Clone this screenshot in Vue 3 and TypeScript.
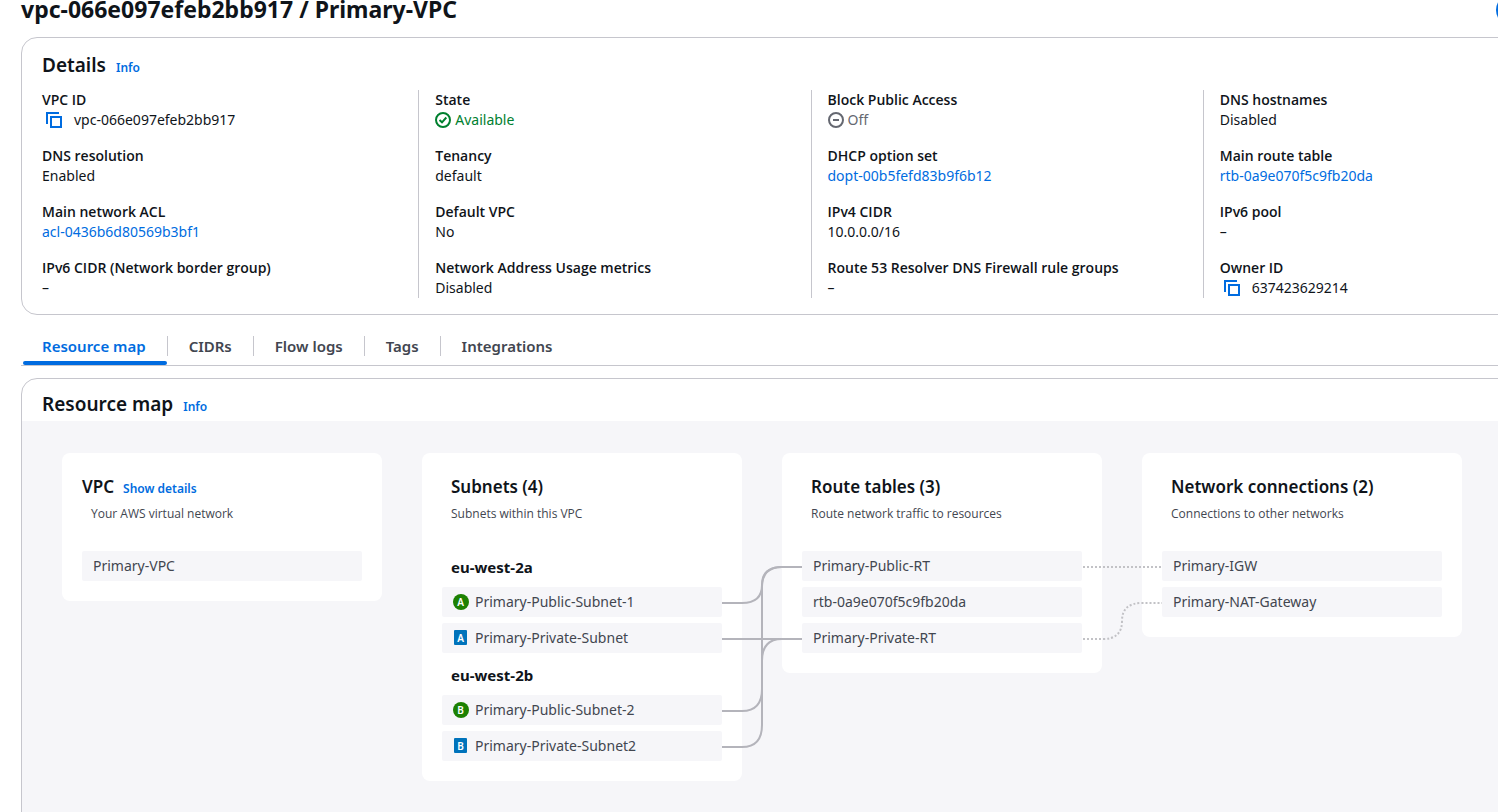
<script setup lang="ts">
type Kind = 'text' | 'link' | 'copy' | 'ok' | 'off'
interface Field {
  label: string
  value: string
  kind: Kind
}
interface Item {
  name: string
  zone?: boolean
  badge?: string
  access?: 'public' | 'private'
}
interface Card {
  title: string
  subtitle: string
  link?: string
  items: Item[]
}

const f = (label: string, value: string, kind: Kind = 'text'): Field => ({ label, value, kind })

const columns: Field[][] = [
  [
    f('VPC ID', 'vpc-066e097efeb2bb917', 'copy'),
    f('DNS resolution', 'Enabled'),
    f('Main network ACL', 'acl-0436b6d80569b3bf1', 'link'),
    f('IPv6 CIDR (Network border group)', '–'),
  ],
  [
    f('State', 'Available', 'ok'),
    f('Tenancy', 'default'),
    f('Default VPC', 'No'),
    f('Network Address Usage metrics', 'Disabled'),
  ],
  [
    f('Block Public Access', 'Off', 'off'),
    f('DHCP option set', 'dopt-00b5fefd83b9f6b12', 'link'),
    f('IPv4 CIDR', '10.0.0.0/16'),
    f('Route 53 Resolver DNS Firewall rule groups', '–'),
  ],
  [
    f('DNS hostnames', 'Disabled'),
    f('Main route table', 'rtb-0a9e070f5c9fb20da', 'link'),
    f('IPv6 pool', '–'),
    f('Owner ID', '637423629214', 'copy'),
  ],
]

const tabs: string[] = ['Resource map', 'CIDRs', 'Flow logs', 'Tags', 'Integrations']

const cards: Card[] = [
  {
    title: 'VPC',
    subtitle: 'Your AWS virtual network',
    link: 'Show details',
    items: [{ name: 'Primary-VPC' }],
  },
  {
    title: 'Subnets (4)',
    subtitle: 'Subnets within this VPC',
    items: [
      { name: 'eu-west-2a', zone: true },
      { name: 'Primary-Public-Subnet-1', badge: 'A', access: 'public' },
      { name: 'Primary-Private-Subnet', badge: 'A', access: 'private' },
      { name: 'eu-west-2b', zone: true },
      { name: 'Primary-Public-Subnet-2', badge: 'B', access: 'public' },
      { name: 'Primary-Private-Subnet2', badge: 'B', access: 'private' },
    ],
  },
  {
    title: 'Route tables (3)',
    subtitle: 'Route network traffic to resources',
    items: [
      { name: 'Primary-Public-RT' },
      { name: 'rtb-0a9e070f5c9fb20da' },
      { name: 'Primary-Private-RT' },
    ],
  },
  {
    title: 'Network connections (2)',
    subtitle: 'Connections to other networks',
    items: [{ name: 'Primary-IGW' }, { name: 'Primary-NAT-Gateway' }],
  },
]

// Connector coordinates are relative to the top left corner of the first card.
const solid: string[] = [
  'M660 150H680Q700 150 700 132Q700 114 720 114H740',
  'M660 186H740',
  'M660 258H680Q700 258 700 236V134Q700 114 720 114',
  'M660 294H680Q700 294 700 272V208Q700 186 720 186H740',
]
const dotted: string[] = [
  'M1021 114H1100',
  'M1021 186H1041Q1060 186 1060 168Q1060 150 1080 150H1100',
]
</script>

<template>
  <main class="page">
    <header class="title-row">
      <h1>vpc-066e097efeb2bb917 / Primary-VPC</h1>
      <button class="primary" type="button" aria-label="Actions"></button>
    </header>

    <section class="panel">
      <div class="panel-head">
        <h2>Details</h2>
        <a class="info" href="#">Info</a>
      </div>
      <div class="columns">
        <dl v-for="(col, c) in columns" :key="c" class="column">
          <div v-for="field in col" :key="field.label">
            <dt>{{ field.label }}</dt>
            <dd :class="field.kind">
              <button v-if="field.kind === 'copy'" class="copy-button" type="button" :aria-label="'Copy ' + field.label">
                <svg viewBox="0 0 16 16" width="16" height="16" fill="none" stroke="currentColor" stroke-width="2">
                  <path d="M1 12V1H13" />
                  <path d="M5 5H15V15H5Z" />
                </svg>
              </button>
              <svg v-else-if="field.kind === 'ok'" viewBox="0 0 16 16" width="16" height="16" fill="none" stroke="currentColor" stroke-width="2">
                <circle cx="8" cy="8" r="7" />
                <path d="M4.500 8L7 10.300L11.300 5.500" />
              </svg>
              <svg v-else-if="field.kind === 'off'" viewBox="0 0 16 16" width="16" height="16" fill="none" stroke="currentColor" stroke-width="2">
                <circle cx="8" cy="8" r="7" />
                <path d="M5 8H11" />
              </svg>
              <a v-if="field.kind === 'link'" href="#">{{ field.value }}</a>
              <span v-else>{{ field.value }}</span>
            </dd>
          </div>
        </dl>
      </div>
    </section>

    <div class="tabs" role="tablist">
      <button
        v-for="(tab, i) in tabs"
        :key="tab"
        type="button"
        role="tab"
        class="tab"
        :class="{ active: i === 0 }"
        :aria-selected="i === 0"
      >
        <span>{{ tab }}</span>
      </button>
    </div>

    <section class="panel map-panel">
      <div class="panel-head map-head">
        <h2>Resource map</h2>
        <a class="info" href="#">Info</a>
      </div>
      <div class="map">
        <div class="cards">
          <article v-for="(card, i) in cards" :key="card.title" class="card" :class="{ first: i === 0 }">
            <div class="card-head">
              <h3>{{ card.title }}</h3>
              <a v-if="card.link" href="#">{{ card.link }}</a>
            </div>
            <p>{{ card.subtitle }}</p>
            <ul>
              <li v-for="item in card.items" :key="item.name" :class="item.zone ? 'zone' : 'item'">
                <svg v-if="item.badge" class="badge" viewBox="0 0 16 16" width="16" height="16">
                  <circle v-if="item.access === 'public'" cx="8" cy="8" r="8" fill="#1d8102" />
                  <rect v-else x="1" y="0" width="13" height="15" rx="1" fill="#0073bb" />
                  <text x="7.500" y="11.500" text-anchor="middle">{{ item.badge }}</text>
                </svg>
                <span>{{ item.name }}</span>
              </li>
            </ul>
          </article>
          <svg class="links" width="1400" height="328" viewBox="0 0 1400 328" fill="none" stroke-width="2" aria-hidden="true">
            <path v-for="d in solid" :key="d" :d="d" stroke="#b4b4bb" />
            <path v-for="d in dotted" :key="d" :d="d" stroke="#c2c2c6" stroke-dasharray="2 2" />
          </svg>
        </div>
      </div>
    </section>
  </main>
</template>

<style>
body {
  margin: 0;
  background: #fff;
}
</style>

<style scoped>
.page {
  box-sizing: border-box;
  height: 100vh;
  overflow: hidden;
  display: flex;
  flex-direction: column;
  padding-left: 21px;
  font-family: 'Noto Sans', 'Open Sans', sans-serif;
  font-size: 14px;
  line-height: 20px;
  color: #0f141a;
}
.page > * {
  flex-shrink: 0;
  margin-right: -118px;
}
h1, h2, h3, p, ul, dl, dd {
  margin: 0;
  padding: 0;
}
a {
  color: #006ce0;
  text-decoration: none;
}
button {
  font: inherit;
  border: 0;
  padding: 0;
  background: none;
  cursor: pointer;
}
.title-row {
  display: flex;
  align-items: flex-start;
  justify-content: space-between;
  margin-top: -6px;
  height: 32px;
}
h1 {
  font-size: 23px;
  line-height: 30px;
  font-weight: 700;
}
.primary {
  width: 120px;
  height: 32px;
  border-radius: 16px;
  background: #006ce0;
}
.panel {
  margin-top: 11px;
  border: 1px solid #c6c6cd;
  border-radius: 16px;
  overflow: hidden;
}
.panel-head {
  display: flex;
  align-items: baseline;
  gap: 10px;
  padding: 15px 20px 13px;
}
h2 {
  font-size: 19px;
  line-height: 24px;
  font-weight: 600;
}
.info {
  font-size: 12px;
  line-height: 16px;
  font-weight: 600;
}
.columns {
  display: grid;
  grid-template-columns: repeat(4, 1fr);
  margin-left: 4px;
  margin-right: 20px;
  padding-bottom: 16px;
}
.column {
  display: grid;
  gap: 16px;
  padding-left: 16px;
  border-left: 1px solid #c6c6cd;
}
.column:first-child {
  padding-left: 15px;
  border-color: transparent;
}
dt {
  font-family: 'Open Sans', 'Noto Sans', sans-serif;
  font-weight: 600;
}
dd {
  display: flex;
  align-items: center;
  gap: 4px;
}
.ok {
  color: #00802f;
}
.off {
  color: #656871;
}
.copy {
  gap: 12px;
  padding-left: 4px;
}
.copy-button {
  display: flex;
  color: #006ce0;
}
.tabs {
  display: flex;
  margin-top: 11px;
  height: 39px;
  border-bottom: 1px solid #c6c6cd;
}
.tab {
  display: flex;
  align-items: flex-start;
  padding-top: 10px;
  font-size: 15px;
  line-height: 20px;
  font-weight: 600;
  color: #424650;
}
.tab span {
  padding: 0 21px;
  border-right: 1px solid #c6c6cd;
}
.tab:last-child span {
  border-color: transparent;
}
.tab.active {
  position: relative;
  color: #006ce0;
}
.tab.active::after {
  content: '';
  position: absolute;
  left: 2px;
  right: 1px;
  bottom: 0;
  height: 4px;
  border-radius: 2px;
  background: #006ce0;
}
.page > .map-panel {
  flex: 1 0 auto;
  margin-top: 12px;
  margin-bottom: -20px;
  display: flex;
  flex-direction: column;
}
.map-head {
  padding: 13px 20px 5px;
}
.map {
  flex: 1;
  padding: 32px 40px;
  background: #f6f6f9;
}
.cards {
  position: relative;
  display: grid;
  grid-template-columns: repeat(4, 320px);
  align-items: start;
  gap: 40px;
}
.card {
  padding: 20px;
  border-radius: 8px;
  background: #fff;
}
.card-head {
  display: flex;
  align-items: baseline;
  gap: 9px;
  padding: 2px 9px;
}
.first .card-head {
  padding-left: 0;
}
h3 {
  font-size: 17px;
  line-height: 24px;
  font-weight: 600;
}
.card-head a {
  font-size: 12px;
  line-height: 16px;
  font-weight: 600;
}
.card p {
  padding: 5px 9px 29px;
  font-family: 'Open Sans', 'Noto Sans', sans-serif;
  font-size: 12px;
  line-height: 16px;
  color: #424650;
}
ul {
  display: grid;
  gap: 6px;
  list-style: none;
}
li {
  display: flex;
  align-items: center;
  height: 30px;
}
.zone {
  padding: 1px 9px 0;
  box-sizing: border-box;
  font-size: 15px;
  font-weight: 700;
}
.item {
  gap: 6px;
  padding: 0 11px;
  border-radius: 2px;
  background: #f6f6f9;
  color: #424650;
}
.badge text {
  fill: #fff;
  font-size: 10px;
  font-weight: 600;
}
.links {
  position: absolute;
  left: 0;
  top: 0;
  overflow: visible;
  pointer-events: none;
}
</style>
